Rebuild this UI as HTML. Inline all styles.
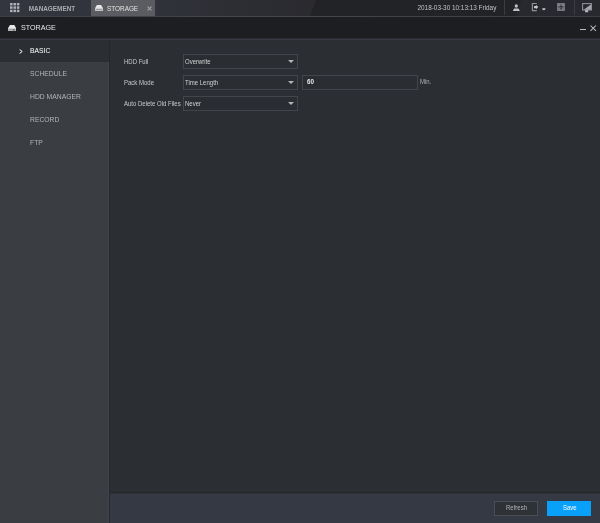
<!DOCTYPE html>
<html><head><meta charset="utf-8">
<style>
*{margin:0;padding:0;box-sizing:border-box}
html,body{width:600px;height:523px;overflow:hidden;background:#2b2e33;font-family:"Liberation Sans",sans-serif;}
.abs{position:absolute}
#top{left:0;top:0;width:600px;height:16px;background:#222327;}
#topL{left:0;top:0;width:320px;height:16px;background:linear-gradient(90deg,#33363e 0%,#30333a 48%,#2c2d32 78%,#2a2a2f 100%);clip-path:polygon(0 0,316px 0,310px 16px,0 16px)}
#topR{left:510px;top:0;width:90px;height:16px;background:#28292e;clip-path:polygon(11px 0,90px 0,90px 16px,6px 16px)}
#topline{left:0;top:16px;width:600px;height:1px;background:linear-gradient(90deg,#3c3e42,#45474b 45%,#3c3d40)}
#hl1{left:0;top:38px;width:600px;height:1px;background:#2b2e34}
#hl2{left:0;top:39px;width:600px;height:1px;background:#363941}
.t{position:absolute;white-space:nowrap;line-height:1}
body{will-change:transform}
#tab{left:91px;top:0;width:64px;height:16px;background:#5b5c61}
#hdr{left:0;top:17px;width:600px;height:21px;background:#1c1e21}
#side{left:0;top:40px;width:109px;height:485px;background:#3a3d42}
#sideline{left:108px;top:40px;width:1px;height:485px;background:#41444a}
#sideline2{left:109px;top:40px;width:1px;height:485px;background:#25272a}
#active{left:0;top:40px;width:109px;height:22px;background:#2b2e32}
.mi{position:absolute;left:30px;font-size:7.3px;transform:scaleX(0.93);transform-origin:0 0;color:#b3b5b9;white-space:nowrap;line-height:1}
#main{left:110px;top:40px;width:490px;height:452px;background:#2b2e33}
#foot{left:110px;top:492px;width:490px;height:31px;background:#353943;border-top:1px solid #25272b;box-shadow:inset 0 1px 0 #2f323a}
.lbl{position:absolute;left:123.7px;font-size:6.6px;transform:scaleX(0.91);transform-origin:0 0;color:#c9cacc;white-space:nowrap;line-height:1}
.sel{position:absolute;left:183px;width:115px;height:15px;border:1px solid #42454c;background:#2a2d31}
.sel span{position:absolute;left:1px;top:3.7px;font-size:6.6px;transform:scaleX(0.91);transform-origin:0 0;color:#d0d1d3;white-space:nowrap;line-height:1}
.arr{position:absolute;right:3px;top:5px;width:0;height:0;border-left:3px solid transparent;border-right:3px solid transparent;border-top:3px solid #b3b4b7}
</style></head><body>
<div id="top" class="abs"></div>
<div id="topL" class="abs"></div>
<div id="topR" class="abs"></div>
<div id="tab" class="abs"></div>

<!-- grid icon -->
<svg class="abs" style="left:9.8px;top:2.9px" width="10" height="10" viewBox="0 0 10 10">
<g fill="#adb0b8"><rect x="0" y="0" width="2.55" height="2.45"/><rect x="3.42" y="0" width="2.55" height="2.45"/><rect x="6.84" y="0" width="2.55" height="2.45"/><rect x="0" y="3.35" width="2.55" height="2.45"/><rect x="3.42" y="3.35" width="2.55" height="2.45"/><rect x="6.84" y="3.35" width="2.55" height="2.45"/><rect x="0" y="6.7" width="2.55" height="2.45"/><rect x="3.42" y="6.7" width="2.55" height="2.45"/><rect x="6.84" y="6.7" width="2.55" height="2.45"/></g></svg>
<div class="t" style="left:28.7px;top:5.75px;font-size:6.4px;font-weight:bold;color:#a9abb0">MANAGEMENT</div>
<!-- storage icon tab -->
<svg class="abs" style="left:95px;top:5px" width="8" height="6" viewBox="0 0 8 6">
<path d="M1.9 0.1 Q2 0 2.3 0 H5.7 Q6 0 6.1 0.1 L8 3.2 V6 H0 V3.2 Z" fill="#e6e6e6"/><rect x="0" y="3.4" width="8" height="2.6" fill="#c4c4c6"/><rect x="0.8" y="4.2" width="6.4" height="0.7" fill="#8c8d90"/>
</svg>
<div class="t" style="left:107px;top:5.8px;font-size:6.4px;color:#e4e4e4">STORAGE</div>
<svg class="abs" style="left:146.5px;top:5.7px" width="5" height="5" viewBox="0 0 5 5"><path d="M0.6 0.6 L4.4 4.4 M4.4 0.6 L0.6 4.4" stroke="#a4a4a7" stroke-width="1.05"/></svg>
<div class="t" style="left:417.5px;top:5.1px;font-size:6.4px;color:#c3c4c7">2018-03-30 10:13:13 Friday</div>
<div class="abs" style="left:504px;top:0;width:1px;height:15px;background:#3a3c40"></div>
<div class="abs" style="left:574px;top:0;width:1px;height:15px;background:#3a3c40"></div>
<!-- user icon -->
<svg class="abs" style="left:512px;top:3px" width="9" height="9" viewBox="0 0 9 9">
<ellipse cx="4.3" cy="3" rx="1.6" ry="1.8" fill="#bfc1c6"/><path d="M0.8 8 L2.1 5.6 Q2.3 5.4 2.6 5.4 H6 Q6.3 5.4 6.5 5.6 L7.9 8 Z" fill="#bfc1c6"/>
</svg>
<!-- logout icon -->
<svg class="abs" style="left:531px;top:3px" width="16" height="9" viewBox="0 0 16 9">
<path d="M5.8 0.4 H1.4 V7.6 H5.8" fill="none" stroke="#8e9095" stroke-width="1.2"/>
<path d="M3 3 H5 V1.9 L7.3 4.1 L5 6.3 V5.2 H3 Z" fill="#c6c7cb"/>
<path d="M11.2 5.2 H14.5 Q14.5 7.2 12.85 7.2 Q11.2 7.2 11.2 5.2 Z" fill="#c6c7cb"/>
</svg>
<!-- grid2 icon -->
<svg class="abs" style="left:556.9px;top:2.9px" width="8" height="8" viewBox="0 0 8 8">
<rect x="0" y="0" width="7.8" height="8" fill="#5f626a"/>
<rect x="0.4" y="0.4" width="7" height="7.2" fill="none" stroke="#787b82" stroke-width="0.8"/>
<rect x="0.8" y="0.8" width="2.2" height="2.2" fill="#7d8087"/><rect x="4.8" y="0.8" width="2.2" height="2.2" fill="#7d8087"/>
<rect x="0.8" y="5" width="2.2" height="2.2" fill="#757880"/><rect x="4.8" y="5" width="2.2" height="2.2" fill="#757880"/>
<rect x="2.5" y="3" width="3" height="1" fill="#2c2e34"/><rect x="3.5" y="4.6" width="1.6" height="1.1" fill="#2c2e34"/>
</svg>
<!-- monitor icon -->
<svg class="abs" style="left:581.5px;top:2.7px" width="10" height="10" viewBox="0 0 10 10">
<rect x="0.6" y="0.6" width="8.8" height="6.4" fill="#26272b" stroke="#8c8f95" stroke-width="1.1"/>
<path d="M9.2 1.2 V6.8 H1.6 Z" fill="#a3a6ac"/><path d="M3.3 7 H5.9 L6.3 9.3 H2.9 Z" fill="#b3b6bb"/>
</svg>

<div id="hdr" class="abs"></div><div id="topline" class="abs"></div><div id="hl1" class="abs"></div><div id="hl2" class="abs"></div>
<svg class="abs" style="left:8px;top:24.7px" width="8.4" height="6.4" viewBox="0 0 8.4 6.4">
<path d="M2 0.1 Q2.1 0 2.4 0 H5.9 Q6.2 0 6.3 0.1 L8.4 3.3 V6.4 H0 V3.3 Z" fill="#e8e8e8"/><rect x="0" y="3.5" width="8.4" height="2.9" fill="#b9b9bb"/><rect x="0.8" y="4.5" width="3.6" height="0.7" fill="#8a8b8d"/><rect x="4.8" y="4.4" width="2" height="0.9" fill="#3a3b3d"/>
</svg>
<div class="t" style="left:20.6px;top:23.7px;font-size:7.7px;transform:scaleX(0.93);transform-origin:0 0;color:#e6e6e6">STORAGE</div>
<div class="abs" style="left:580px;top:29px;width:6px;height:1px;background:#bdbdbf"></div>
<svg class="abs" style="left:589.6px;top:24.6px" width="7" height="7" viewBox="0 0 7 7"><path d="M0.5 0.5 L5.9 5.9 M5.9 0.5 L0.5 5.9" stroke="#bdbdbf" stroke-width="1.05"/></svg>

<div id="side" class="abs"></div>
<div id="sideline" class="abs"></div>
<div id="active" class="abs"></div>
<div id="sideline2" class="abs"></div><div class="abs" style="left:110px;top:40px;width:1px;height:483px;background:#292b30"></div>
<svg class="abs" style="left:18.8px;top:49px" width="4" height="5" viewBox="0 0 4 5"><path d="M0.6 0.5 L3.2 2.5 L0.6 4.5" fill="none" stroke="#ffffff" stroke-width="1"/></svg>
<div class="mi" style="top:46.6px;color:#ffffff">BASIC</div>
<div class="mi" style="top:70.2px">SCHEDULE</div>
<div class="mi" style="top:93px">HDD MANAGER</div>
<div class="mi" style="top:116px">RECORD</div>
<div class="mi" style="top:138.9px">FTP</div>

<div id="main" class="abs"></div>
<div class="lbl" style="top:58.7px">HDD Full</div>
<div class="lbl" style="top:79.7px">Pack Mode</div>
<div class="lbl" style="top:100.7px">Auto Delete Old Files</div>
<div class="sel" style="top:54px"><span>Overwrite</span><i class="arr"></i></div>
<div class="sel" style="top:75px"><span>Time Length</span><i class="arr"></i></div>
<div class="sel" style="top:96px"><span>Never</span><i class="arr"></i></div>
<div class="abs" style="left:302px;top:75px;width:116px;height:15px;border:1px solid #42454c;background:#2a2d31"></div>
<div class="t" style="left:307px;top:78px;font-size:7px;transform:scaleX(0.9);transform-origin:0 0;font-weight:bold;color:#e8e8e8">60</div>
<div class="t" style="left:419.6px;top:78.7px;font-size:6.6px;transform:scaleX(0.91);transform-origin:0 0;color:#aeb0b3">Min.</div>

<div id="foot" class="abs"></div>
<div class="abs" style="left:494px;top:501px;width:44px;height:15px;border:1px solid #4a4d53;background:#2e3136"></div>
<div class="t" style="left:505.6px;top:505px;font-size:6.6px;transform:scaleX(0.91);transform-origin:0 0;color:#b4b5b8">Refresh</div>
<div class="abs" style="left:547px;top:501px;width:44px;height:15px;background:#09a0f9"></div>
<div class="t" style="left:562.6px;top:505px;font-size:6.6px;transform:scaleX(0.91);transform-origin:0 0;color:#ffffff">Save</div>
</body></html>
